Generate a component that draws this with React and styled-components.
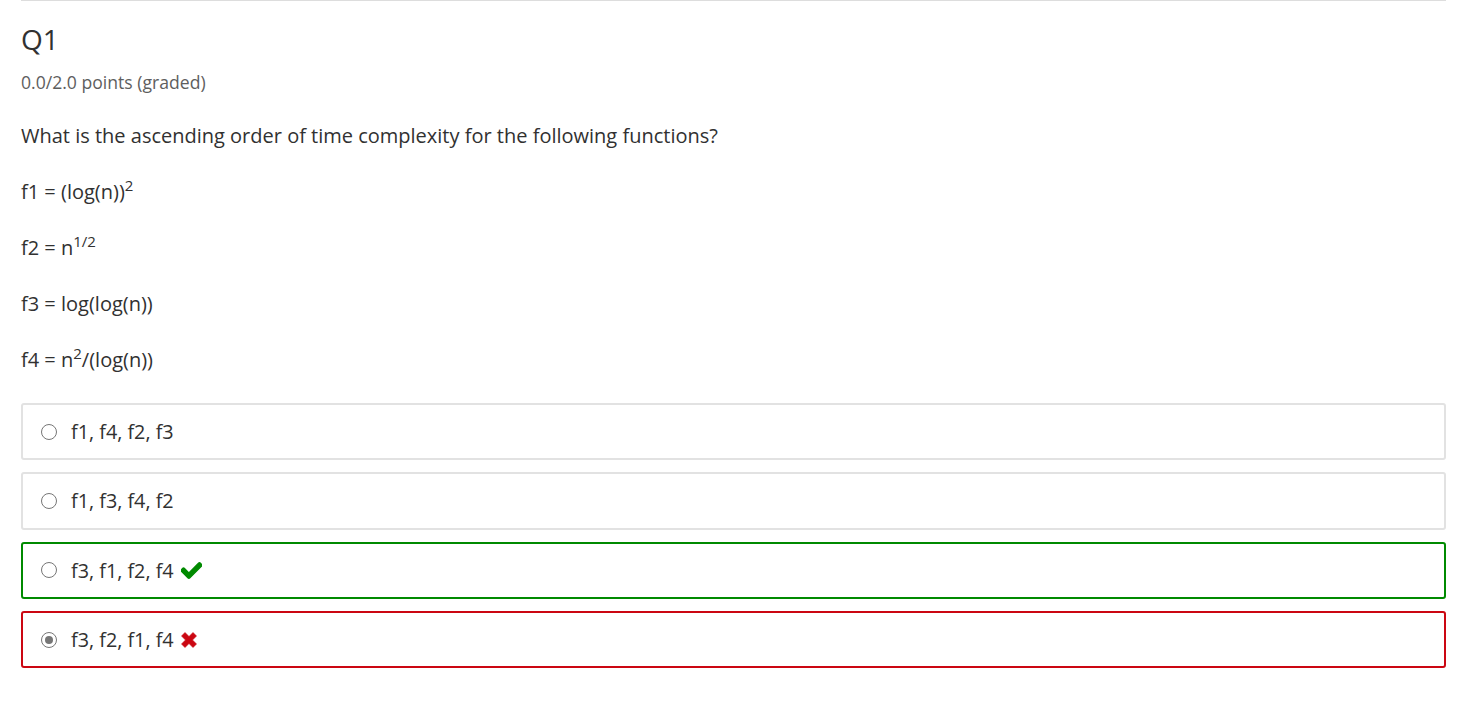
import styled, { createGlobalStyle } from "styled-components"
import { FaCheck } from "react-icons/fa"

const GlobalStyle = createGlobalStyle`
	body {
		margin: 0;
		background: #fff;
		font-family: "Open Sans", "Noto Sans", sans-serif;
		color: #313131;
	}
`

const options = [
	{ label: "f1, f4, f2, f3", status: "none", checked: false },
	{ label: "f1, f3, f4, f2", status: "none", checked: false },
	{ label: "f3, f1, f2, f4", status: "correct", checked: false },
	{ label: "f3, f2, f1, f4", status: "incorrect", checked: true },
]

function CrossIcon() {
	return (
		<svg width="16" height="16" viewBox="0 0 16 16">
			<path
				d="M4 0.5 L8 4.5 L12 0.5 L15.5 4 L11.5 8 L15.5 12 L12 15.5 L8 11.5 L4 15.5 L0.5 12 L4.5 8 L0.5 4 Z"
				fill="#cb0712"
				stroke="#cb0712"
				strokeWidth="0.6"
				strokeLinejoin="round"
			/>
		</svg>
	)
}

function App() {
	return (
		<>
			<GlobalStyle />
			<StyledProblem>
				<StyledTitle>Q1</StyledTitle>
				<StyledPoints>0.0/2.0 points (graded)</StyledPoints>
				<StyledText>What is the ascending order of time complexity for the following functions?</StyledText>
				<StyledText>f1 = (log(n))<sup>2</sup></StyledText>
				<StyledText>f2 = n<sup>1/2</sup></StyledText>
				<StyledText>f3 = log(log(n))</StyledText>
				<StyledText>f4 = n<sup>2</sup>/(log(n))</StyledText>
				<StyledChoices>
					{options.map((option, index) => (
						<StyledChoice key={index} $status={option.status}>
							<StyledRadio $checked={option.checked} />
							<StyledChoiceText>{option.label}</StyledChoiceText>
							{option.status === "correct" && (
								<StyledCheck size={21} color="#008a00" />
							)}
							{option.status === "incorrect" && <CrossIcon />}
						</StyledChoice>
					))}
				</StyledChoices>
			</StyledProblem>
		</>
	)
}

const StyledProblem = styled.div`
	margin: 0 14px 0 21px;
	border-top: 1px solid #dddddd;
`

const StyledTitle = styled.h3`
	margin: 20px 0 0;
	font-size: 28px;
	font-weight: 400;
	line-height: 36px;
	color: #313131;
`

const StyledPoints = styled.div`
	margin-top: 12px;
	font-size: 17.6px;
	line-height: 26px;
	color: #5e5e5e;
`

const StyledText = styled.p`
	margin: 0;
	margin-top: 26px;
	font-size: 20px;
	line-height: 30px;
	color: #313131;

	sup {
		font-size: 15px;
		line-height: 0;
		vertical-align: 8px;
	}
`

const colors = {
	none: "#e2e2e2",
	correct: "#008a00",
	incorrect: "#cb0712",
}

const StyledChoices = styled.div`
	display: flex;
	flex-direction: column;
	gap: 12px;
	margin-top: 28px;
`

const StyledChoice = styled.label`
	display: flex;
	align-items: center;
	height: 57.33px;
	box-sizing: border-box;
	padding: 0 18px;
	border: 2px solid ${(p) => colors[p.$status]};
	border-radius: 3px;
	font-size: 19.8px;
	color: #313131;
`

const StyledChoiceText = styled.span`
	margin-left: 14px;
	margin-right: 7px;
`

const StyledCheck = styled(FaCheck)`
	stroke: #008a00;
	stroke-width: 30px;
`

const StyledRadio = styled.div`
	box-sizing: border-box;
	width: 16px;
	height: 16px;
	border-radius: 50%;
	border: 1px solid #767676;
	background: #fff;
	flex: none;
	position: relative;

	&::after {
		content: "";
		display: ${(p) => (p.$checked ? "block" : "none")};
		position: absolute;
		inset: 3px;
		border-radius: 50%;
		background: #767676;
	}
`

export default App
